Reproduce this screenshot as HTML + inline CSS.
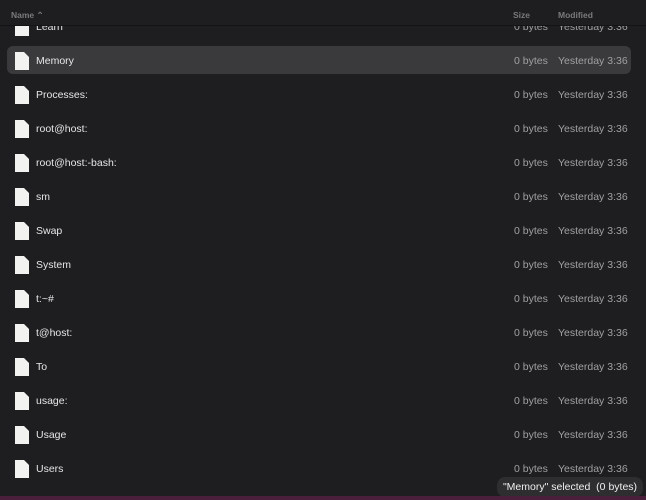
<!DOCTYPE html>
<html><head><style>
body{margin:0;width:646px;height:500px;background:#1e1e20;overflow:hidden;position:relative;font-family:"Liberation Sans",sans-serif}
.top{position:absolute;left:50px;top:0;width:450px;height:3px;background:#2a2a2c}
.hdr{position:absolute;top:0;left:0;width:646px;height:25px;border-bottom:1px solid #141416;font-size:8.5px;font-weight:bold;color:#7a7a7e;background:#1e1e20}
.hdr span{position:absolute;top:10px}
.row{position:absolute;left:7px;width:624px;height:28px;color:#e6e6e8;font-size:10.5px}
.row.sel{background:#3a3a3c;border-radius:6px}
.row svg{position:absolute;left:7px;top:4px}
.row .n{position:absolute;left:29px;top:8px}
.row .s{position:absolute;left:507px;top:8px;color:#a0a0a4}
.row .m{position:absolute;left:551px;top:8px;color:#a0a0a4}
.pill{position:absolute;left:497px;top:477px;width:146px;height:20px;border-radius:8px;background:#2e2e30;color:#f0f0f0;font-size:10.5px;line-height:20px;text-align:center}
.bot{position:absolute;left:0;top:496px;width:646px;height:4px;background:#4a1f3c}
</style></head><body>
<div class="top"></div>
<div class="row" style="top:13px"><svg width="16" height="20" viewBox="0 0 16 20"><path d="M1 1H10L15 6V19H1Z" fill="#f2f2f0"/></svg><span class="n">Learn</span><span class="s">0 bytes</span><span class="m">Yesterday 3:36</span></div>
<div class="hdr"><span style="left:11px">Name ⌃</span><span style="left:513px">Size</span><span style="left:558px">Modified</span></div>
<div class="row sel" style="top:46px"><svg width="16" height="20" viewBox="0 0 16 20" style="top:5px"><path d="M1 1H10L15 6V19H1Z" fill="#f2f2f0"/></svg><span class="n" style="top:9px">Memory</span><span class="s" style="top:9px">0 bytes</span><span class="m" style="top:9px">Yesterday 3:36</span></div>
<div class="row" style="top:81px"><svg width="16" height="20" viewBox="0 0 16 20"><path d="M1 1H10L15 6V19H1Z" fill="#f2f2f0"/></svg><span class="n">Processes:</span><span class="s">0 bytes</span><span class="m">Yesterday 3:36</span></div>
<div class="row" style="top:115px"><svg width="16" height="20" viewBox="0 0 16 20"><path d="M1 1H10L15 6V19H1Z" fill="#f2f2f0"/></svg><span class="n">root@host:</span><span class="s">0 bytes</span><span class="m">Yesterday 3:36</span></div>
<div class="row" style="top:149px"><svg width="16" height="20" viewBox="0 0 16 20"><path d="M1 1H10L15 6V19H1Z" fill="#f2f2f0"/></svg><span class="n">root@host:-bash:</span><span class="s">0 bytes</span><span class="m">Yesterday 3:36</span></div>
<div class="row" style="top:183px"><svg width="16" height="20" viewBox="0 0 16 20"><path d="M1 1H10L15 6V19H1Z" fill="#f2f2f0"/></svg><span class="n">sm</span><span class="s">0 bytes</span><span class="m">Yesterday 3:36</span></div>
<div class="row" style="top:217px"><svg width="16" height="20" viewBox="0 0 16 20"><path d="M1 1H10L15 6V19H1Z" fill="#f2f2f0"/></svg><span class="n">Swap</span><span class="s">0 bytes</span><span class="m">Yesterday 3:36</span></div>
<div class="row" style="top:251px"><svg width="16" height="20" viewBox="0 0 16 20"><path d="M1 1H10L15 6V19H1Z" fill="#f2f2f0"/></svg><span class="n">System</span><span class="s">0 bytes</span><span class="m">Yesterday 3:36</span></div>
<div class="row" style="top:285px"><svg width="16" height="20" viewBox="0 0 16 20"><path d="M1 1H10L15 6V19H1Z" fill="#f2f2f0"/></svg><span class="n">t:~#</span><span class="s">0 bytes</span><span class="m">Yesterday 3:36</span></div>
<div class="row" style="top:319px"><svg width="16" height="20" viewBox="0 0 16 20"><path d="M1 1H10L15 6V19H1Z" fill="#f2f2f0"/></svg><span class="n">t@host:</span><span class="s">0 bytes</span><span class="m">Yesterday 3:36</span></div>
<div class="row" style="top:353px"><svg width="16" height="20" viewBox="0 0 16 20"><path d="M1 1H10L15 6V19H1Z" fill="#f2f2f0"/></svg><span class="n">To</span><span class="s">0 bytes</span><span class="m">Yesterday 3:36</span></div>
<div class="row" style="top:387px"><svg width="16" height="20" viewBox="0 0 16 20"><path d="M1 1H10L15 6V19H1Z" fill="#f2f2f0"/></svg><span class="n">usage:</span><span class="s">0 bytes</span><span class="m">Yesterday 3:36</span></div>
<div class="row" style="top:421px"><svg width="16" height="20" viewBox="0 0 16 20"><path d="M1 1H10L15 6V19H1Z" fill="#f2f2f0"/></svg><span class="n">Usage</span><span class="s">0 bytes</span><span class="m">Yesterday 3:36</span></div>
<div class="row" style="top:455px"><svg width="16" height="20" viewBox="0 0 16 20"><path d="M1 1H10L15 6V19H1Z" fill="#f2f2f0"/></svg><span class="n">Users</span><span class="s">0 bytes</span><span class="m">Yesterday 3:36</span></div>
<div class="pill">"Memory" selected&nbsp; (0 bytes)</div>
<div class="bot"></div>
</body></html>
